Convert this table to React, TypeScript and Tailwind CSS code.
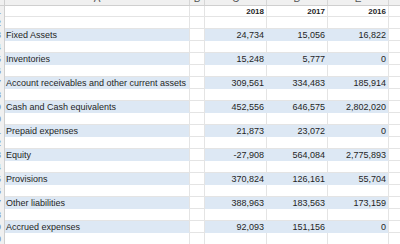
import React from 'react';

type Row = { label: string; v2018: string; v2017: string; v2016: string };

const rows: Row[] = [
  { label: 'Fixed Assets', v2018: '24,734', v2017: '15,056', v2016: '16,822' },
  { label: 'Inventories', v2018: '15,248', v2017: '5,777', v2016: '0' },
  { label: 'Account receivables and other current assets', v2018: '309,561', v2017: '334,483', v2016: '185,914' },
  { label: 'Cash and Cash equivalents', v2018: '452,556', v2017: '646,575', v2016: '2,802,020' },
  { label: 'Prepaid expenses', v2018: '21,873', v2017: '23,072', v2016: '0' },
  { label: 'Equity', v2018: '-27,908', v2017: '564,084', v2016: '2,775,893' },
  { label: 'Provisions', v2018: '370,824', v2017: '126,161', v2016: '55,704' },
  { label: 'Other liabilities', v2018: '388,963', v2017: '183,563', v2016: '173,159' },
  { label: 'Accrued expenses', v2018: '92,093', v2017: '151,156', v2016: '0' },
];

const font = { fontFamily: '"Liberation Sans", Arial, sans-serif' };

const RowHead: React.FC<{ n: number }> = ({ n }) => (
  <div className="w-[5px] shrink-0 overflow-hidden bg-[#f0f0f0] border-r border-[#cfcfcf] flex items-center justify-end pr-[3px]">
    <span className="text-[9px] leading-none text-[#6f84a8]">{n}</span>
  </div>
);

const GridRow: React.FC<{
  n: number;
  blue?: boolean;
  h?: string;
  label?: string;
  c?: string;
  d?: string;
  e?: string;
  bold?: boolean;
}> = ({ n, blue, h = 'h-[12px]', label, c, d, e, bold }) => {
  const fill = blue ? 'bg-[#dde8f4] border-b-[#dde8f4]' : 'bg-white border-b-[#e4e4e4]';
  const num = `flex items-center justify-end pr-[2px] pt-[1px] border-b ${fill} ${bold ? 'font-bold text-[8px]' : 'text-[9px]'}`;
  return (
    <div className={`flex ${h}`}>
      <RowHead n={n} />
      <div className={`w-[185px] shrink-0 flex items-center pl-[1px] pt-[1px] border-b border-r border-r-[#e4e4e4] text-[9px] ${fill}`}>
        {label}
      </div>
      <div className="w-[15px] shrink-0 bg-white border-b border-r border-[#e4e4e4]" />
      <div className={`w-[62px] shrink-0 border-r ${blue ? 'border-r-[#dde8f4]' : 'border-r-[#e4e4e4]'} ${num}`}>{c}</div>
      <div className={`w-[61px] shrink-0 border-r ${blue ? 'border-r-[#dde8f4]' : 'border-r-[#e4e4e4]'} ${num}`}>{d}</div>
      <div className={`w-[61px] shrink-0 border-r border-r-[#e4e4e4] ${num}`}>{e}</div>
      <div className="flex-1 bg-white border-b border-[#e4e4e4]" />
    </div>
  );
};

export default function App() {
  const cols = [
    { w: 'w-[185px]', l: 'A' },
    { w: 'w-[15px]', l: 'B' },
    { w: 'w-[62px]', l: 'C' },
    { w: 'w-[61px]', l: 'D' },
    { w: 'w-[61px]', l: 'E' },
  ];
  return (
    <div className="w-[400px] h-[244px] overflow-hidden bg-white text-[#1f1f1f] leading-none" style={font}>
      <div className="flex h-[6px] bg-[#f0f0f0] border-b border-[#cfcfcf]">
        <div className="w-[5px] shrink-0 border-r border-[#cfcfcf]" />
        {cols.map((col) => (
          <div
            key={col.l}
            className={`${col.w} shrink-0 border-r border-[#d6d6d6] overflow-hidden flex items-end justify-center`}
          >
            <span className="text-[10px] leading-none text-[#555] mb-[1px]">{col.l}</span>
          </div>
        ))}
        <div className="flex-1" />
      </div>
      <GridRow n={1} h="h-[11px]" c="2018" d="2017" e="2016" bold />
      <GridRow n={2} />
      {rows.map((r, i) => (
        <React.Fragment key={r.label}>
          <GridRow n={3 + i * 2} blue label={r.label} c={r.v2018} d={r.v2017} e={r.v2016} />
          <GridRow n={4 + i * 2} />
        </React.Fragment>
      ))}
    </div>
  );
}
